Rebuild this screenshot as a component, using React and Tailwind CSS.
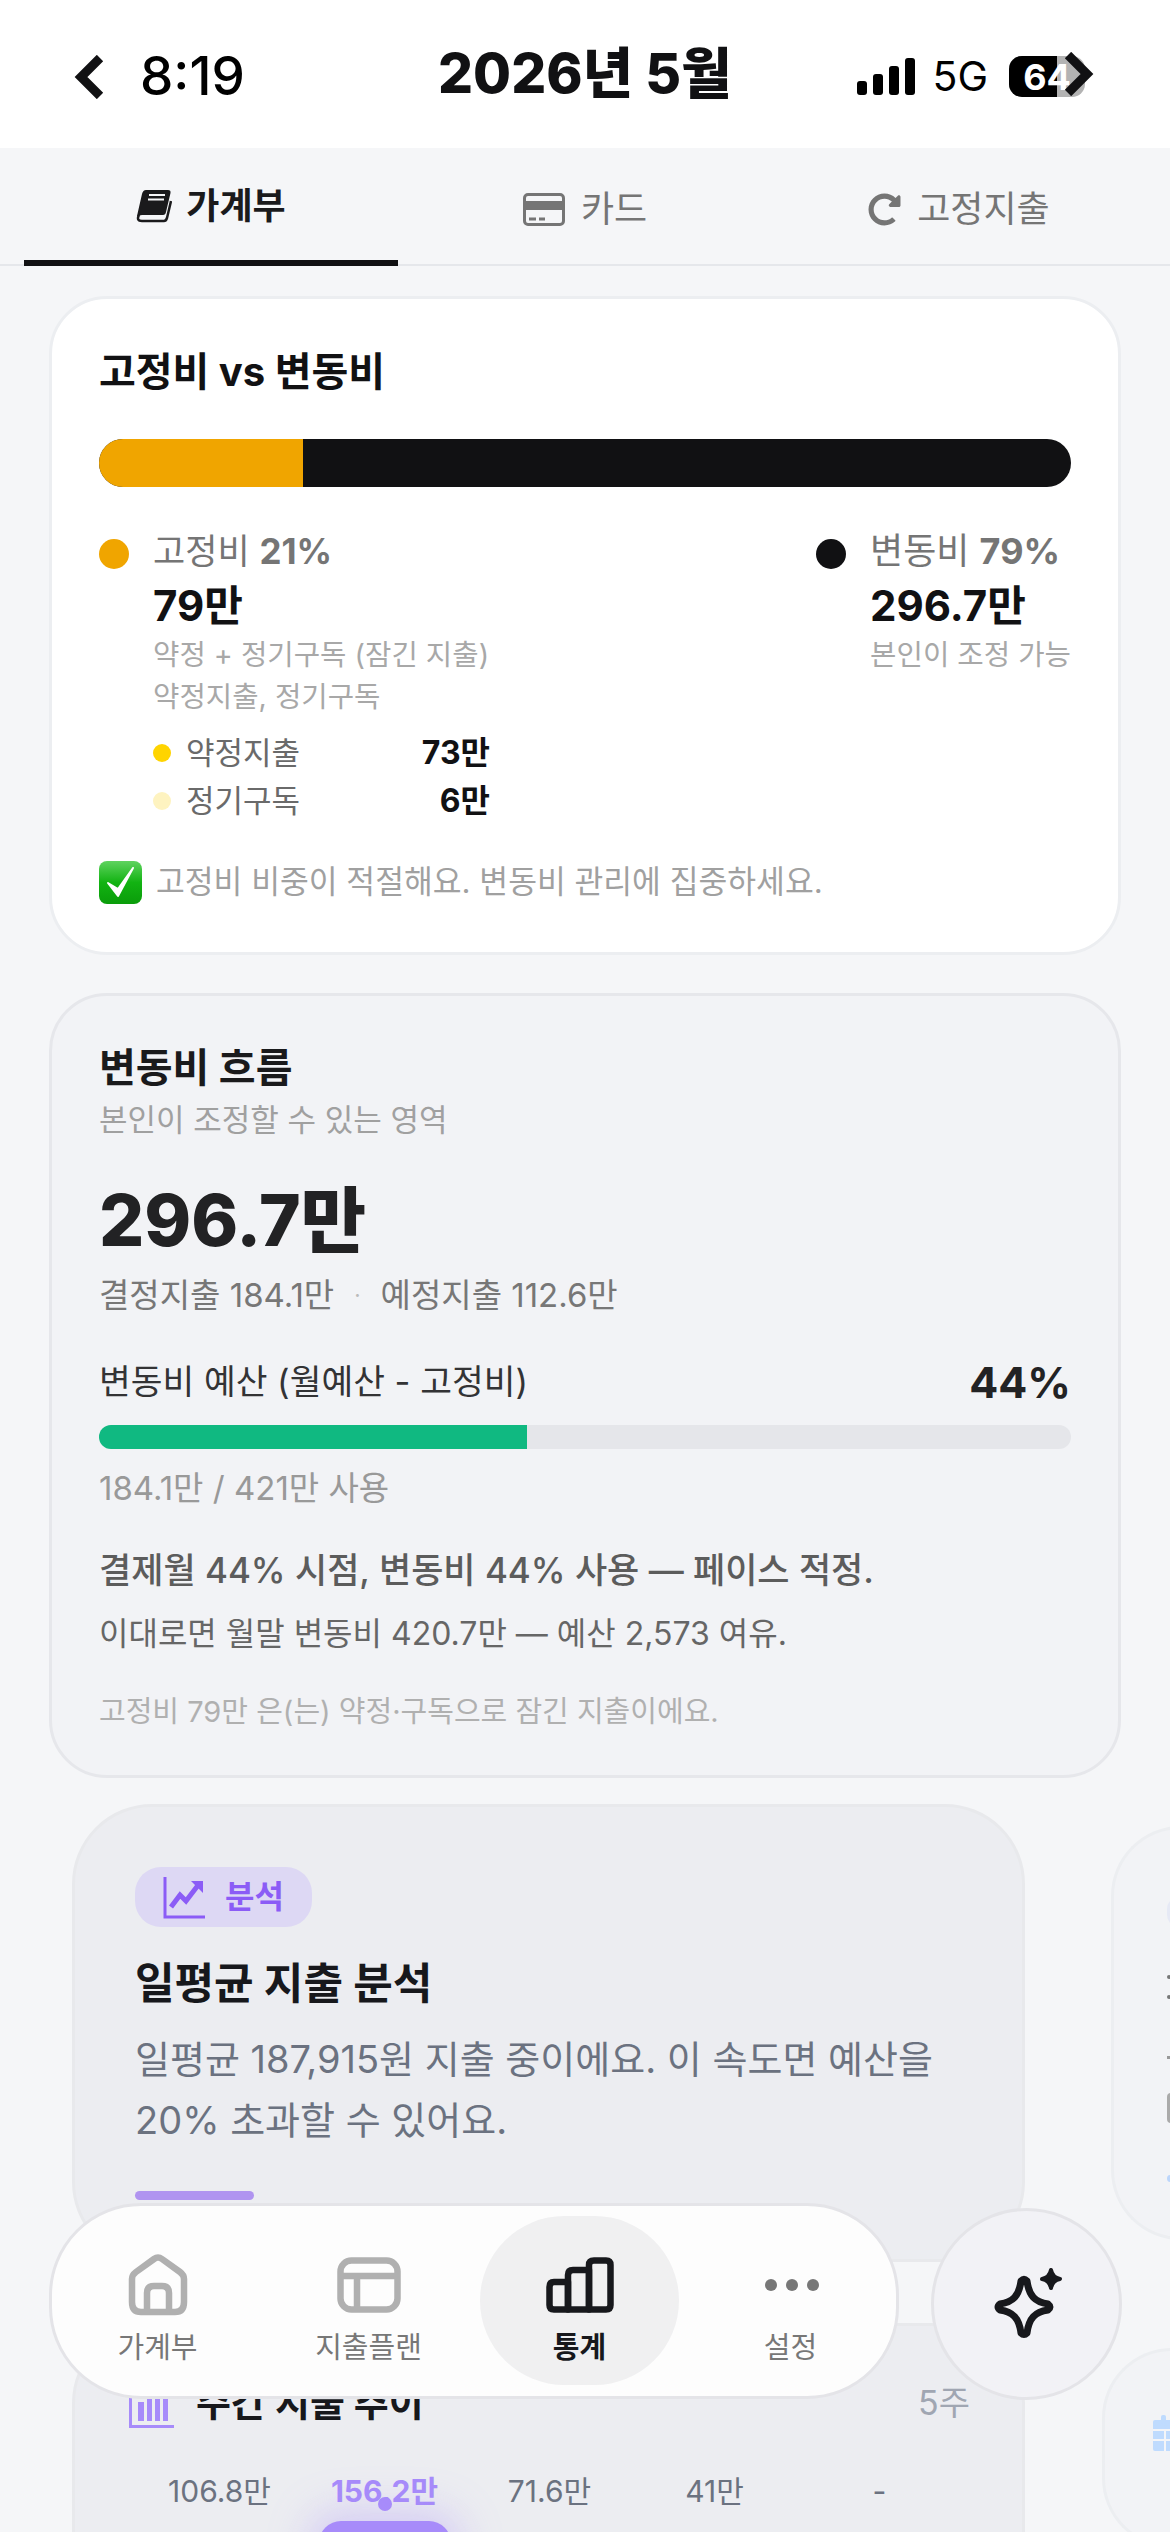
import React from 'react';
import { FaRedoAlt } from 'react-icons/fa';

const Chevron = ({ dir }) => (
  <svg width="32" height="44" viewBox="0 0 32 44" className="shrink-0">
    <path d={dir === 'left' ? 'M27 3 L8 22 L27 41' : 'M5 3 L24 22 L5 41'} fill="none" stroke="#111113" strokeWidth="9" strokeLinejoin="miter" />
  </svg>
);

const Signal = () => (
  <svg width="58" height="37" viewBox="0 0 58 37">
    <rect x="0" y="23" width="10" height="14" rx="3" fill="#000" />
    <rect x="16" y="16" width="10" height="21" rx="3" fill="#000" />
    <rect x="32" y="8" width="10" height="29" rx="3" fill="#000" />
    <rect x="48" y="0" width="10" height="37" rx="3" fill="#000" />
  </svg>
);

const BookIcon = () => (
  <svg width="36" height="33" viewBox="0 0 36 33">
    <path d="M10 0 H32 Q35 0 34.5 3 L30 22 Q29.5 25 27 25 H6 Q3 25 2.5 27 L1 26 L6 4 Q7 0 10 0 Z" fill="#1a1a1c" />
    <path d="M3 25 Q0 31 6 31 H28 Q30 31 31 28 L35 11" fill="none" stroke="#1a1a1c" strokeWidth="2.5" />
    <path d="M13 5 H29 M12 9.5 H28" stroke="#f5f6f8" strokeWidth="2" />
  </svg>
);

const CardIcon = () => (
  <svg width="42" height="33" viewBox="0 0 42 33">
    <rect x="1.5" y="1.5" width="39" height="30" rx="3.5" fill="none" stroke="#757575" strokeWidth="3" />
    <rect x="2" y="8" width="38" height="9" fill="#757575" />
    <path d="M6 26 H13 M16 26 H22" stroke="#757575" strokeWidth="3" />
  </svg>
);

const CheckEmoji = () => (
  <svg width="43" height="43" viewBox="0 0 43 43" className="shrink-0">
    <defs>
      <linearGradient id="chk" x1="0" y1="0" x2="0" y2="1">
        <stop offset="0" stopColor="#5fd35f" />
        <stop offset="0.5" stopColor="#12b312" />
        <stop offset="1" stopColor="#0a9c0a" />
      </linearGradient>
    </defs>
    <rect x="0" y="0" width="43" height="43" rx="8" fill="url(#chk)" />
    <path d="M9 22 L19 35 L34 7 L19 28 Z" fill="#fff" stroke="#fff" strokeWidth="2" strokeLinejoin="round" />
  </svg>
);

const HomeIcon = () => (
  <svg width="60" height="62" viewBox="0 0 60 62" fill="none" stroke="#b0b0b0" strokeWidth="6.5" strokeLinejoin="round">
    <path d="M4 25 Q4 21 8 18 L26 5 Q30 2 34 5 L52 18 Q56 21 56 25 V48 Q56 58 47 58 H13 Q4 58 4 48 Z" />
    <path d="M19 58 V39 Q19 32 26 32 H34 Q41 32 41 39 V58" />
  </svg>
);

const PlanIcon = () => (
  <svg width="64" height="56" viewBox="0 0 64 56" fill="none" stroke="#b0b0b0" strokeWidth="6.5">
    <rect x="3.5" y="3.5" width="57" height="49" rx="11" />
    <path d="M4 19 H60 M20 19 V52" />
  </svg>
);

const StatsIcon = () => (
  <svg width="68" height="56" viewBox="0 0 68 56" fill="none" stroke="#17181c" strokeWidth="6.5" strokeLinejoin="round">
    <path d="M3.5 30 Q3.5 25 8 25 H22 V52.5 H8 Q3.5 52.5 3.5 48 Z" />
    <path d="M22 52.5 V18 Q22 13 27 13 H43 V52.5 Z" />
    <path d="M43 52.5 V8 Q43 3.5 48 3.5 H60 Q64.5 3.5 64.5 8 V48 Q64.5 52.5 60 52.5 Z" />
  </svg>
);

const DotsIcon = () => (
  <div className="flex items-center gap-[9px] pl-[3px]">
    <span className="w-[12px] h-[12px] rounded-full bg-[#777]" />
    <span className="w-[12px] h-[12px] rounded-full bg-[#777]" />
    <span className="w-[12px] h-[12px] rounded-full bg-[#777]" />
  </div>
);

const SparkIcon = () => (
  <svg width="72" height="72" viewBox="0 0 72 72">
    <path d="M30 13 Q33 10 36 13 C38 28 44 34 57 36 Q61 39 57 42 C44 44 38 50 36 65 Q33 68 30 65 C28 50 22 44 9 42 Q5 39 9 36 C22 34 28 28 30 13 Z" fill="none" stroke="#17181c" strokeWidth="7" strokeLinejoin="round" />
    <path d="M60 2 C61 7 63 10 69 11 C63 12 61 15 60 20 C59 15 57 12 51 11 C57 10 59 7 60 2 Z" fill="#17181c" stroke="#17181c" strokeWidth="4" strokeLinejoin="round" />
  </svg>
);

const TrendIcon = () => (
  <svg width="42" height="44" viewBox="0 0 42 44" fill="none" stroke="#8b5cf6">
    <path d="M2 2 V42 H42" strokeWidth="3" />
    <path d="M8 32 L17 20 L23 26 L36 9" strokeWidth="5" />
    <path d="M28 6 H40 V18 Z" fill="#8b5cf6" stroke="none" />
  </svg>
);

const BarsIcon = () => (
  <svg width="45" height="50" viewBox="0 0 45 50" fill="#a78bfa">
    <rect x="0" y="0" width="3" height="50" />
    <rect x="0" y="47" width="45" height="3" />
    <rect x="9" y="24" width="6" height="19" />
    <rect x="18" y="14" width="5" height="29" />
    <rect x="26" y="8" width="5" height="35" />
    <rect x="34" y="14" width="5" height="29" />
  </svg>
);

const CalendarIcon = () => (
  <svg width="40" height="36" viewBox="0 0 40 36" fill="#bfdbfe">
    <rect x="0" y="5" width="40" height="31" rx="2" />
    <rect x="8" y="0" width="5" height="9" rx="2" />
    <path d="M0 15 H40 M0 25 H40 M12 15 V36 M24 15 V36" stroke="#f4f5f8" strokeWidth="2" />
  </svg>
);

const LegendSub = ({ color, label, value }) => (
  <div className="flex items-center h-[48px] w-[337px]">
    <span className="w-[18px] h-[18px] rounded-full" style={{ background: color }} />
    <span className="ml-[15px] text-[31px] text-[#6a6a6a]">{label}</span>
    <span className="ml-auto text-[32px] font-bold text-[#111113]">{value}</span>
  </div>
);

const NavItem = ({ icon, label, active }) => (
  <div className="relative flex flex-col items-center pt-[49px]">
    <div className="h-[60px] flex items-center justify-center">{icon}</div>
    <span className={`mt-[13px] text-[29px] leading-[40px] ${active ? 'font-bold text-[#17181c]' : 'text-[#777]'}`}>{label}</span>
  </div>
);

const weeks = [
  { v: '106.8만' },
  { v: '156.2만', on: true },
  { v: '71.6만' },
  { v: '41만' },
  { v: '-' },
];

export default function App() {
  return (
    <div
      className="relative w-[1170px] h-[2532px] overflow-hidden bg-[#f5f6f8]"
      style={{ fontFamily: 'Inter, "Noto Sans CJK KR", sans-serif' }}
    >
      {/* header */}
      <div className="h-[148px] bg-white relative flex items-center justify-between pl-[73px] pr-[85px] pt-[5px]">
        <div className="flex items-center gap-[35px]">
          <Chevron dir="left" />
          <span className="text-[53px] font-medium text-black leading-none">8:19</span>
        </div>
        <span className="absolute left-[438px] top-[46px] text-[55px] font-extrabold leading-none text-[#111113]">2026년 5월</span>
        <div className="flex items-center gap-[21px]">
          <div className="-mr-[4px]"><Signal /></div>
          <span className="text-[41px] leading-none text-black">5G</span>
          <div className="relative w-[76px] h-[41px] rounded-[13px] overflow-hidden bg-[#b3b3b3]">
            <div className="w-[48px] h-full bg-black" />
            <span className="absolute inset-0 flex items-center justify-center text-[36px] font-bold text-white leading-none">64</span>
          </div>
        </div>
        <div className="absolute left-[1063px] top-[52px]">
          <Chevron dir="right" />
        </div>
      </div>

      {/* tabs */}
      <div className="h-[118px] px-[24px] border-b-2 border-[#e5e7eb] grid grid-cols-3">
        <div className="flex items-center justify-center gap-[14px] border-b-[6px] border-[#111113] -mb-[2px] pt-[4px]">
          <BookIcon />
          <span className="text-[36px] font-semibold text-[#1a1a1c]">가계부</span>
        </div>
        <div className="flex items-center justify-center gap-[16px] text-[#757575] pt-[6px]">
          <CardIcon />
          <span className="text-[36px]">카드</span>
        </div>
        <div className="flex items-center justify-center gap-[16px] text-[#757575] pt-[6px]">
          <FaRedoAlt className="text-[33px]" />
          <span className="text-[36px]">고정지출</span>
        </div>
      </div>

      {/* 고정비 vs 변동비 */}
      <div className="mx-[49px] mt-[30px] h-[659px] rounded-[58px] border-[3px] border-[#eceef1] bg-white px-[47px] pt-[45px]">
        <h3 className="text-[40px] leading-[56px] font-bold text-[#111113]">고정비 vs 변동비</h3>
        <div className="mt-[39px] h-[48px] rounded-full overflow-hidden flex bg-[#111113]">
          <div className="w-[21%] bg-[#f0a500]" />
        </div>
        <div className="mt-[39px] flex justify-between">
          <div className="flex">
            <span className="mt-[13px] w-[30px] h-[30px] rounded-full bg-[#f0a500]" />
            <div className="ml-[24px]">
              <p className="text-[35px] leading-[50px] text-[#757575]">고정비 <b className="font-bold">21%</b></p>
              <p className="mt-[4px] text-[42px] leading-[52px] font-bold text-[#111113]">79만</p>
              <p className="mt-[2px] text-[28.7px] leading-[42px] text-[#a8a8a8]">약정 + 정기구독 (잠긴 지출)</p>
              <p className="text-[28.7px] leading-[42px] text-[#a8a8a8]">약정지출, 정기구독</p>
              <div className="mt-[11px]">
                <LegendSub color="#ffd400" label="약정지출" value="73만" />
                <LegendSub color="#fef3c0" label="정기구독" value="6만" />
              </div>
            </div>
          </div>
          <div className="flex">
            <span className="mt-[13px] w-[30px] h-[30px] rounded-full bg-[#111113]" />
            <div className="ml-[24px]">
              <p className="text-[36px] leading-[50px] text-[#757575]">변동비 <b className="font-bold">79%</b></p>
              <p className="mt-[4px] text-[42px] leading-[52px] font-bold text-[#111113]">296.7만</p>
              <p className="mt-[2px] text-[28.7px] leading-[42px] text-[#a8a8a8]">본인이 조정 가능</p>
            </div>
          </div>
        </div>
        <div className="mt-[34px] flex items-center gap-[14px]">
          <CheckEmoji />
          <span className="text-[31.3px] text-[#a0a0a0]">고정비 비중이 적절해요. 변동비 관리에 집중하세요.</span>
        </div>
      </div>

      {/* 변동비 흐름 */}
      <div className="mx-[49px] mt-[38px] h-[785px] rounded-[58px] border-[3px] border-[#e6e7eb] bg-[#f2f3f6] px-[47px] pt-[46px]">
        <h3 className="text-[40px] leading-[52px] font-bold text-[#1a1a1c]">변동비 흐름</h3>
        <p className="mt-[4px] text-[31px] leading-[44px] text-[#a0a0a0]">본인이 조정할 수 있는 영역</p>
        <p className="mt-[33px] text-[71px] leading-[90px] font-extrabold text-[#222224]">296.7만</p>
        <div className="mt-[8px] flex items-center text-[33px] leading-[44px] text-[#777]">
          <span>결정지출 184.1만</span>
          <span className="mx-[20px] text-[#bbb] text-[22px]">·</span>
          <span>예정지출 112.6만</span>
        </div>
        <div className="mt-[39px] flex items-center justify-between">
          <span className="text-[34.5px] leading-[52px] text-[#333335]">변동비 예산 (월예산 - 고정비)</span>
          <span className="text-[43px] leading-[52px] font-bold text-[#222224]">44%</span>
        </div>
        <div className="mt-[17px] h-[24px] rounded-full overflow-hidden bg-[#e5e6ea]">
          <div className="w-[44%] h-full bg-[#10b981]" />
        </div>
        <p className="mt-[17px] text-[33px] leading-[44px] text-[#999]">184.1만 / 421만 사용</p>
        <p className="mt-[35px] text-[35px] leading-[50px] font-medium text-[#5c5c5c]">결제월 44% 시점, 변동비 44% 사용 — 페이스 적정.</p>
        <p className="mt-[16px] text-[32px] leading-[46px] text-[#666]">이대로면 월말 변동비 420.7만 — 예산 2,573 여유.</p>
        <p className="mt-[35px] text-[29px] leading-[40px] text-[#b0b0b0]">고정비 79만 은(는) 약정·구독으로 잠긴 지출이에요.</p>
      </div>

      {/* carousel */}
      <div className="mt-[26px] pl-[72px] flex gap-[86px]">
        <div className="w-[953px] shrink-0">
          <div className="h-[458px] rounded-[80px] border-[3px] border-[#e8e9ec] bg-[#ecedf1] pl-[60px] pr-[60px] pt-[60px]">
            <div className="inline-flex items-center gap-[20px] h-[60px] px-[28px] rounded-[26px] bg-[#ddd8f4]">
              <TrendIcon />
              <span className="text-[32px] font-bold text-[#8b5cf6]">분석</span>
            </div>
            <h3 className="mt-[28px] text-[43px] leading-[56px] font-bold text-[#17181c]">일평균 지출 분석</h3>
            <p className="mt-[18px] text-[38px] leading-[61px] text-[#6b7280]">일평균 187,915원 지출 중이에요. 이 속도면 예산을 20% 초과할 수 있어요.</p>
            <div className="mt-[40px] w-[119px] h-[9px] rounded-full bg-[#b094f0]" />
          </div>
          <div className="mt-[61px] h-[400px] rounded-t-[80px] border-[3px] border-b-0 border-[#e8e9ec] bg-[#ecedf1] pl-[54px] pr-[52px] pt-[48px]">
            <div className="flex items-center justify-between">
              <div className="flex items-center gap-[22px]">
                <BarsIcon />
                <span className="text-[38px] font-bold text-[#17181c]">주간 지출 추이</span>
              </div>
              <span className="text-[34px] text-[#a0a6b2]">5주</span>
            </div>
            <div className="mt-[40px] ml-[8px] grid grid-cols-5 w-[825px]">
              {weeks.map(w => (
                <div key={w.v} className="flex flex-col items-center">
                  <span className={`text-[30px] leading-[40px] ${w.on ? 'font-bold text-[#a78bfa]' : 'text-[#6b7280]'}`}>{w.v}</span>
                  {w.on && (
                    <div className="relative flex flex-col items-center">
                      <span className="absolute -top-[14px] w-[14px] h-[14px] rounded-full bg-[#a78bfa]" />
                      <div className="mt-[10px] w-[132px] h-[60px] rounded-t-[22px] bg-[#a78bfa] shadow-[0_0_40px_10px_rgba(167,139,250,0.35)]" />
                    </div>
                  )}
                </div>
              ))}
            </div>
          </div>
        </div>
        <div className="shrink-0">
          <div className="mt-[22px] w-[100px] h-[414px] rounded-l-[70px] border-[3px] border-r-0 border-[#eceef1] bg-[#f2f3f6] pl-[53px] pt-[68px]">
            <div className="w-[40px] h-[30px] rounded-l-[12px] bg-[#e6e9f5]" />
            <div className="mt-[48px] w-[4px] h-[4px] rounded-full bg-[#777]" />
            <div className="mt-[16px] w-[4px] h-[4px] rounded-full bg-[#777]" />
            <div className="mt-[57px] w-[4px] h-[3px] bg-[#999]" />
            <div className="mt-[34px] w-[4px] h-[30px] rounded-l-full bg-[#aaa]" />
            <div className="mt-[52px] w-[6px] h-[7px] rounded-l-full bg-[#bcd6fb]" />
          </div>
          <div className="mt-[108px] -ml-[9px] w-[100px] h-[200px] rounded-l-[70px] border-[3px] border-r-0 border-[#eceef1] bg-[#f2f3f6] pl-[48px] pt-[64px]">
            <CalendarIcon />
          </div>
        </div>
      </div>

      {/* bottom nav */}
      <div className="absolute left-[49px] top-[2203px] w-[850px] h-[196px] rounded-[92px] border-[3px] border-[#e4e4e8] bg-[#fdfdfd] grid grid-cols-4 items-start">
        <NavItem icon={<HomeIcon />} label="가계부" />
        <NavItem icon={<PlanIcon />} label="지출플랜" />
        <div className="relative">
          <div className="absolute left-[6px] top-[10px] w-[199px] h-[169px] rounded-[85px] bg-[#f0f0f1]" />
          <NavItem icon={<StatsIcon />} label="통계" active />
        </div>
        <NavItem icon={<DotsIcon />} label="설정" />
      </div>
      <div className="absolute left-[931px] top-[2208px] w-[191px] h-[192px] rounded-full border-[3px] border-[#e4e4e8] bg-[#f2f2f6] flex items-center justify-center">
        <SparkIcon />
      </div>
    </div>
  );
}
